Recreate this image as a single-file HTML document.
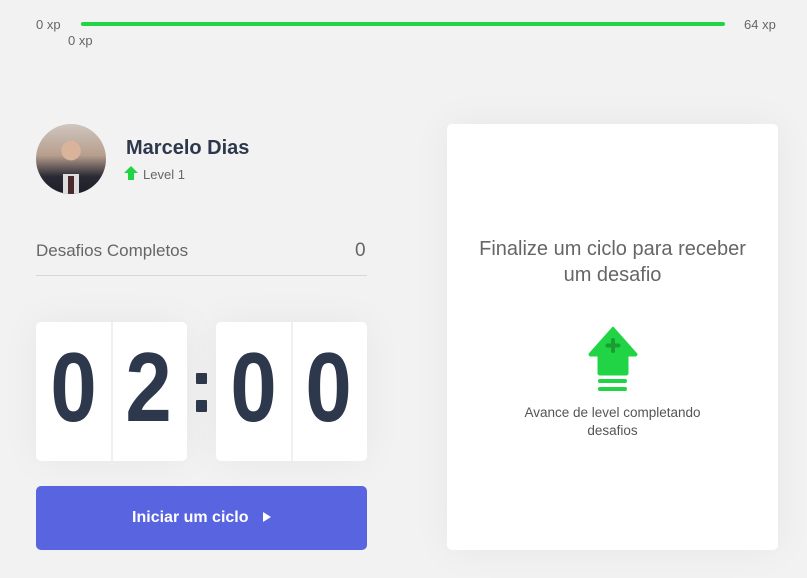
<!DOCTYPE html>
<html><head><meta charset="utf-8"><style>
*{margin:0;padding:0;box-sizing:border-box}
body{width:807px;height:578px;background:#f2f2f2;font-family:"Liberation Sans",sans-serif;position:relative;overflow:hidden;color:#666}
.a{position:absolute}
.xp{font-size:13px;color:#666}
.card{position:absolute;top:322px;width:151px;height:139px;background:#fff;border-radius:5px;box-shadow:0 0 40px rgba(0,0,0,0.05)}
.card .sep{position:absolute;left:75px;top:0;width:1.5px;height:100%;background:#f0f0f0}
.d{position:absolute;top:322px;width:75px;height:139px;text-align:center;font-size:98px;font-weight:bold;line-height:131px;color:#2e384d;transform:scaleX(0.85)}
</style></head><body>
<div class="a xp" style="left:36px;top:17px">0 xp</div>
<div class="a" style="left:81px;top:22px;width:644px;height:4px;background:#21d445;border-radius:2px"></div>
<div class="a xp" style="left:68px;top:33px">0 xp</div>
<div class="a xp" style="left:744px;top:17px">64 xp</div>

<div class="a" style="left:36px;top:124px;width:70px;height:70px;border-radius:50%;background:radial-gradient(circle at 50% 38%,#d9b39a 0 17%,transparent 18%),linear-gradient(180deg,#cfc6bf 0%,#b79e8d 45%,#2a2a35 75%,#1e1e28 100%);overflow:hidden">
<div style="position:absolute;left:27px;top:50px;width:16px;height:20px;background:#ddd;"></div>
<div style="position:absolute;left:32px;top:52px;width:6px;height:18px;background:#4a2a2a;"></div>
</div>
<div class="a" style="left:126px;top:137px;font-size:20px;font-weight:bold;color:#2e384d">Marcelo Dias</div>
<svg class="a" style="left:124px;top:166px" width="14" height="14" viewBox="0 0 14 14"><path d="M7 0L14 7H10V14H4V7H0Z" fill="#21d445"/></svg>
<div class="a" style="left:143px;top:167px;font-size:13px;color:#666">Level 1</div>

<div class="a" style="left:36px;top:241px;font-size:17px;color:#666">Desafios Completos</div>
<div class="a" style="left:355px;top:240px;font-size:19px;color:#666">0</div>
<div class="a" style="left:36px;top:275px;width:331px;height:1px;background:#d7d7d7"></div>

<div class="card" style="left:36px"><div class="sep"></div></div>
<div class="card" style="left:216px"><div class="sep"></div></div>
<div class="d" style="left:36px">0</div>
<div class="d" style="left:111px">2</div>
<div class="d" style="left:216px">0</div>
<div class="d" style="left:291px">0</div>
<div class="a" style="left:196px;top:373px;width:11px;height:11px;background:#2e384d;border-radius:1px"></div>
<div class="a" style="left:196px;top:400px;width:11px;height:12px;background:#2e384d;border-radius:1px"></div>

<div class="a" style="left:36px;top:486px;width:331px;height:64px;background:#5965e0;border-radius:5px;color:#fff;font-weight:bold;font-size:16px;line-height:64px;text-align:center">Iniciar um ciclo <span style="display:inline-block;margin-left:10px;width:0;height:0;border-left:8px solid #fff;border-top:5px solid transparent;border-bottom:5px solid transparent;vertical-align:0px"></span></div>

<div class="a" style="left:447px;top:124px;width:331px;height:426px;background:#fff;border-radius:5px;box-shadow:0 0 40px rgba(0,0,0,0.05)"></div>
<div class="a" style="left:447px;top:236px;width:331px;text-align:center;font-size:20px;line-height:26px;color:#666">Finalize um ciclo para receber<br>um desafio</div>
<svg class="a" style="left:587px;top:326px" width="52" height="66" viewBox="0 0 52 66">
<path d="M26 1L50 28Q50 30 48 30H41V47Q41 49 39 49H13Q11 49 11 47V30H4Q2 30 2 28Z" fill="#21d445" stroke="#21d445" stroke-linejoin="round" stroke-width="1"/>
<path d="M26 14V25M20.5 19.5H31.5" stroke="#1a9e34" stroke-width="4" stroke-linecap="round"/>
<rect x="11" y="53" width="29" height="4" rx="2" fill="#21d445"/>
<rect x="11" y="61" width="29" height="4" rx="2" fill="#21d445"/>
</svg>
<div class="a" style="left:447px;top:404px;width:331px;text-align:center;font-size:13.5px;line-height:18px;color:#555">Avance de level completando<br>desafios</div>
</body></html>
